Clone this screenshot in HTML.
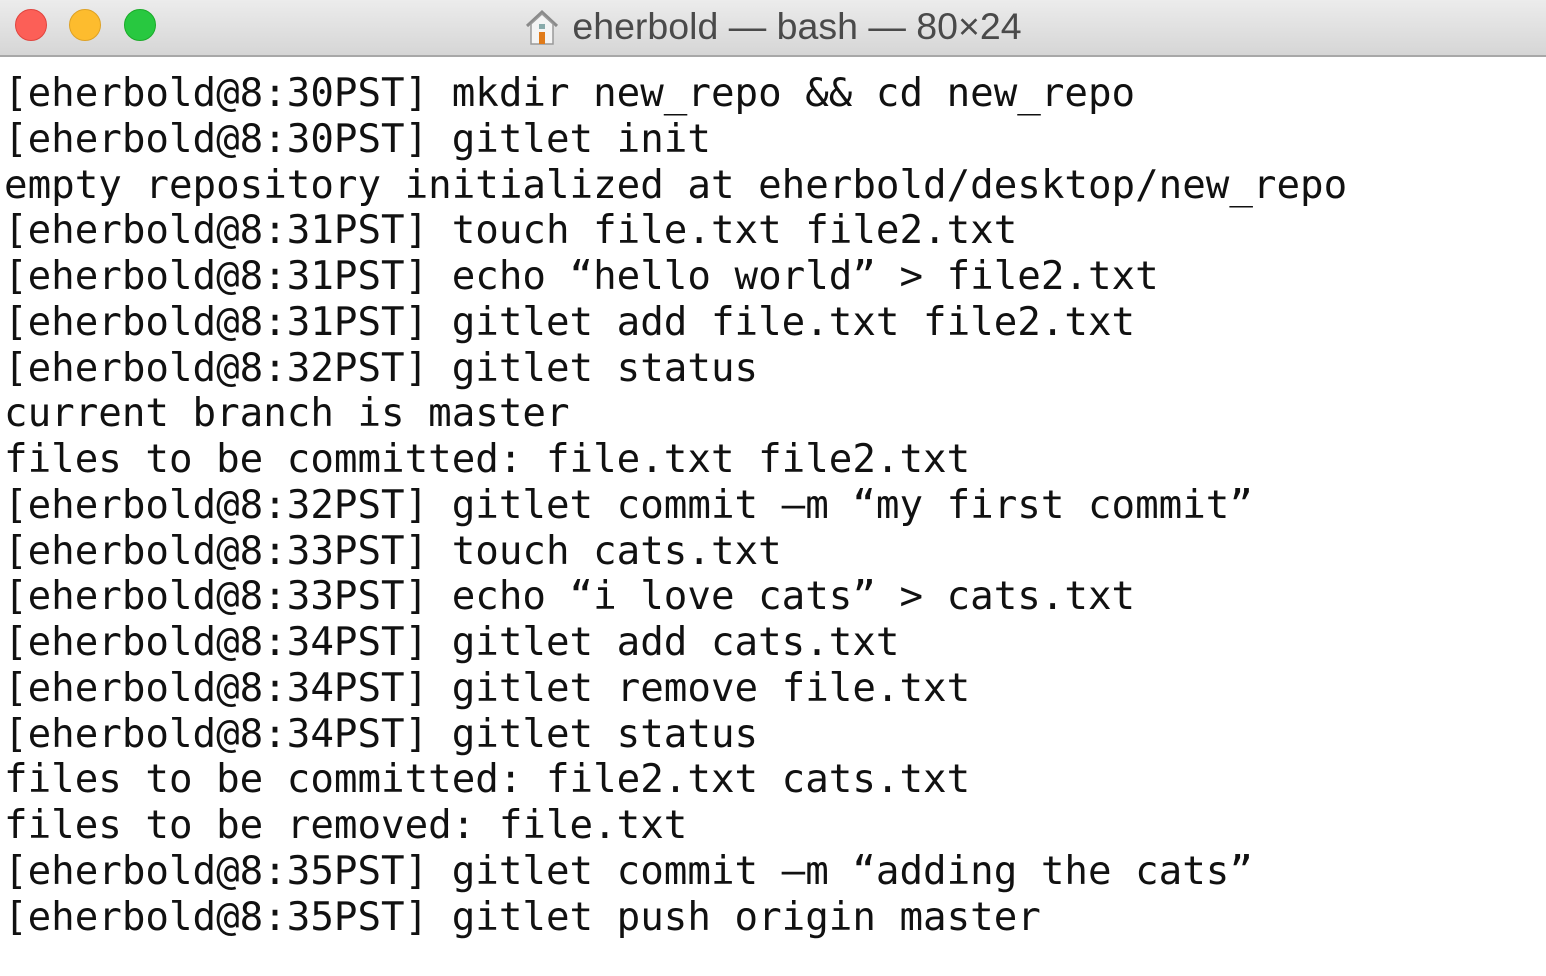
<!DOCTYPE html>
<html><head><meta charset="utf-8"><style>
html,body{margin:0;padding:0;width:1546px;height:976px;overflow:hidden;background:#fff}
.bar{position:absolute;left:0;top:0;width:1546px;height:55px;background:linear-gradient(#ececec,#d6d6d6);border-bottom:2px solid #a8a8a8}
.dot{position:absolute;top:9px;width:32px;height:32px;border-radius:50%}
.title{position:absolute;top:4px;left:0;width:1546px;text-align:center;font:37.5px "Liberation Sans",sans-serif;color:#4a4a4a;line-height:44px}
.term{position:absolute;left:4px;top:71px;font-family:"DejaVu Sans Mono","Liberation Mono",monospace;font-size:39.15px;line-height:45.75px;color:#111;white-space:pre}
</style></head><body>
<div class="bar">
<div class="dot" style="left:15px;background:#fc5f57;border:1px solid #e0443e;width:30px;height:30px"></div>
<div class="dot" style="left:69px;background:#fdbc2e;border:1px solid #dea123;width:30px;height:30px"></div>
<div class="dot" style="left:124px;background:#28c840;border:1px solid #1aab29;width:30px;height:30px"></div>
<div class="title"><svg width="36" height="38" viewBox="0 0 36 38" style="vertical-align:-7px;margin-right:12px"><path d="M3 18 L18 4 L33 18" fill="none" stroke="#8a8a8a" stroke-width="3"/><path d="M7 16 L18 6 L29 16 V36 H7Z" fill="#f4f4f4" stroke="#999" stroke-width="1.5"/><rect x="15" y="24" width="6" height="12" fill="#e07b1a"/><rect x="15" y="16" width="6" height="5" fill="#8aa"/></svg>eherbold — bash — 80×24</div>
</div>
<div class="term">[eherbold@8:30PST] mkdir new_repo &amp;&amp; cd new_repo
[eherbold@8:30PST] gitlet init
empty repository initialized at eherbold/desktop/new_repo
[eherbold@8:31PST] touch file.txt file2.txt
[eherbold@8:31PST] echo “hello world” &gt; file2.txt
[eherbold@8:31PST] gitlet add file.txt file2.txt
[eherbold@8:32PST] gitlet status
current branch is master
files to be committed: file.txt file2.txt
[eherbold@8:32PST] gitlet commit —m “my first commit”
[eherbold@8:33PST] touch cats.txt
[eherbold@8:33PST] echo “i love cats” &gt; cats.txt
[eherbold@8:34PST] gitlet add cats.txt
[eherbold@8:34PST] gitlet remove file.txt
[eherbold@8:34PST] gitlet status
files to be committed: file2.txt cats.txt
files to be removed: file.txt
[eherbold@8:35PST] gitlet commit —m “adding the cats”
[eherbold@8:35PST] gitlet push origin master</div>
</body></html>
